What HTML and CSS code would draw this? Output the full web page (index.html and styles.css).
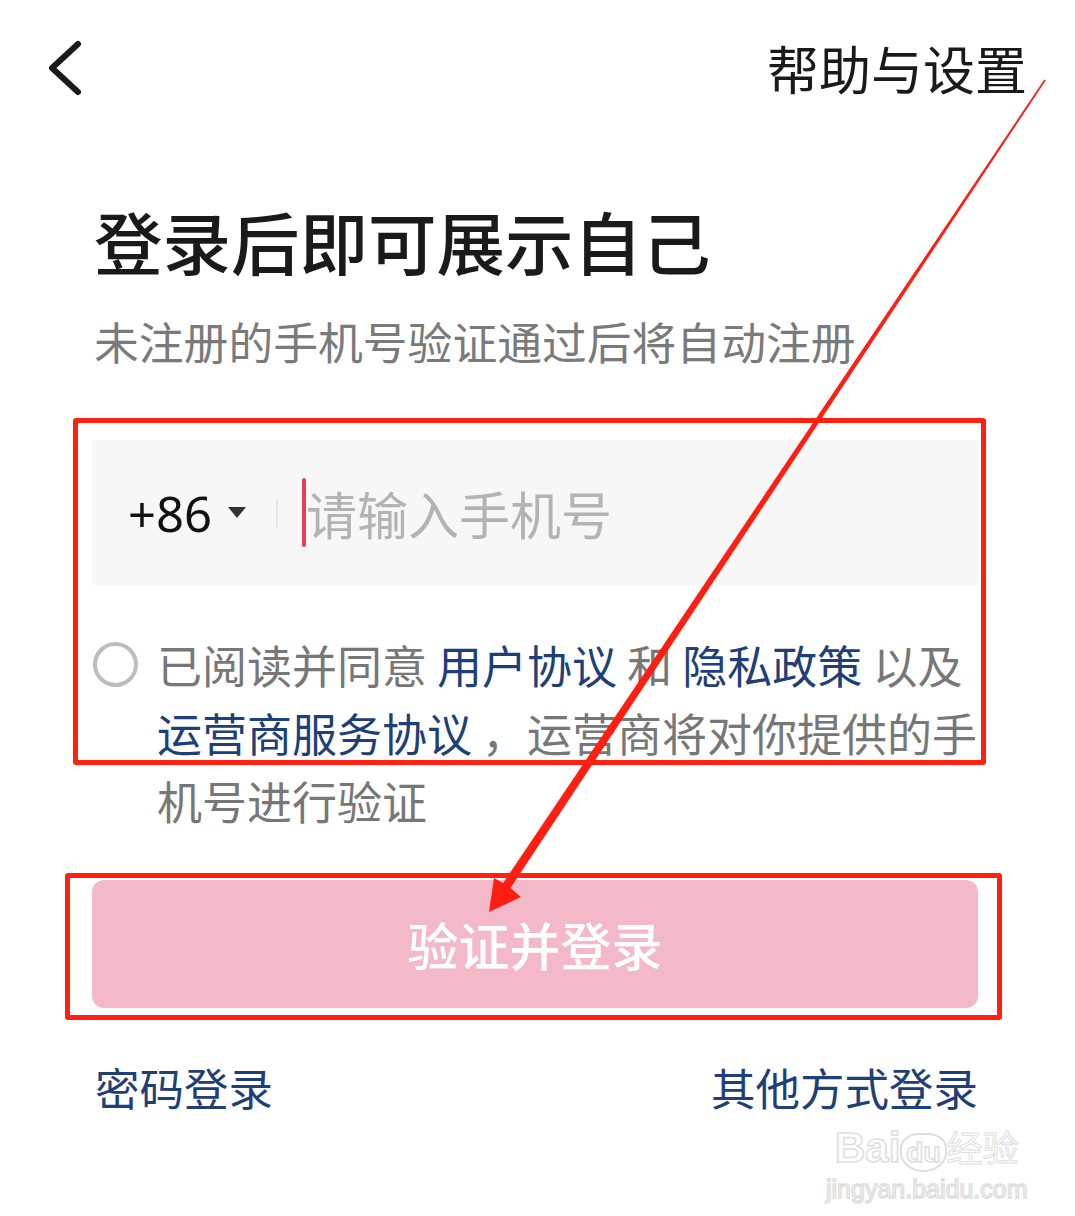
FILE: index.html
```html
<!DOCTYPE html>
<html lang="zh-CN">

<head>
    <meta charset="UTF-8">
    <meta name="viewport" content="width=device-width, initial-scale=1.0">
    <title>登录</title>
    <link rel="stylesheet" href="styles.css">
</head>

<body>
    <div class="page">
        <div class="topbar">
            <svg class="back" width="40" height="60" viewBox="0 0 40 60">
                <polyline points="30,4 4,28 30,52" fill="none" stroke="#1a1a1a" stroke-width="6"
                    stroke-linecap="round" stroke-linejoin="round" />
            </svg>
            <span class="help">帮助与设置</span>
        </div>

        <h1 class="title">登录后即可展示自己</h1>
        <p class="subtitle">未注册的手机号验证通过后将自动注册</p>

        <div class="phone">
            <span class="code">+86</span>
            <span class="caret"></span>
            <span class="divider"></span>
            <span class="cursor"></span>
            <span class="placeholder">请输入手机号</span>
        </div>

        <div class="agree">
            <span class="radio"></span>
            <p class="agree-text">已阅读并同意 <a>用户协议</a> 和 <a>隐私政策</a> 以及<a>运营商服务协议</a> ，运营商将对你提供的手机号进行验证</p>
        </div>

        <button class="submit">验证并登录</button>

        <div class="links">
            <a>密码登录</a>
            <a>其他方式登录</a>
        </div>

        <div class="watermark">
            <div class="wm-logo">Bai<span class="paw">du</span><span class="wm-cn">经验</span></div>
            <div class="wm-url">jingyan.baidu.com</div>
        </div>

        <!-- annotation marks drawn over the screenshot -->
        <div class="mark mark-input"></div>
        <div class="mark mark-button"></div>
        <svg class="arrow" width="1075" height="1216" viewBox="0 0 1075 1216">
            <polygon fill="#ff1e12"
                points="1044.3,79.6 1045.7,80.4 510.5,887.9 521,897 489,912 494,878 503.1,882.9" />
        </svg>
    </div>
</body>

</html>
```

FILE: styles.css
```css
html {
    background-color: #fff;
    font-family: "Noto Sans CJK SC", "Noto Sans", sans-serif;
}

body {
    margin: 0;
}

.page {
    position: relative;
    width: 1075px;
    height: 1216px;
    padding: 0 97px 0 92px;
    box-sizing: border-box;
    overflow: hidden;
}

.topbar {
    display: flex;
    justify-content: space-between;
    align-items: center;
    height: 130px;
    margin-left: -44px;
    margin-right: -49px;
}

.back {
    display: block;
    margin-top: 10px;
}

.help {
    font-size: 52px;
    line-height: 52px;
    color: #1a1a1a;
    margin-top: 6px;
}

.title {
    margin: 77px 0 0 2px;
    font-size: 68.5px;
    line-height: 68px;
    font-weight: 500;
    color: #1a1a1a;
}

.subtitle {
    margin: 44px 0 0 2px;
    font-size: 44.8px;
    line-height: 44px;
    color: #7a7a7a;
}

.phone {
    display: flex;
    align-items: center;
    margin-top: 77px;
    height: 145px;
    padding-left: 36px;
    background-color: #f7f7f7;
}

.code {
    font-family: "Noto Sans", sans-serif;
    font-size: 49px;
    color: #111;
}

.caret {
    width: 0;
    height: 0;
    margin-left: 16px;
    border-left: 9px solid transparent;
    border-right: 9px solid transparent;
    border-top: 11px solid #333;
}

.divider {
    width: 2px;
    height: 28px;
    margin-left: 30px;
    background-color: #e6e6e6;
}

.cursor {
    width: 4px;
    height: 69px;
    margin-left: 24px;
    border-radius: 2px;
    background-color: #e0405e;
}

.placeholder {
    font-size: 51px;
    color: #b3b3b3;
}

.agree {
    display: flex;
    gap: 19px;
    margin-top: 46px;
}

.radio {
    flex: none;
    width: 37px;
    height: 37px;
    margin-top: 11px;
    margin-left: 1px;
    border: 4px solid #bdbdbd;
    border-radius: 50%;
}

.agree-text {
    margin: 0;
    width: 830px;
    font-size: 45px;
    line-height: 68px;
    color: #777;
}

.agree-text a {
    color: #1f3f78;
}

.submit {
    display: block;
    width: 886px;
    height: 128px;
    margin-top: 45px;
    border: none;
    border-radius: 12px;
    background-color: #f3b9c8;
    color: #fff;
    font-family: inherit;
    font-size: 51px;
    font-weight: 500;
}

.links {
    display: flex;
    justify-content: space-between;
    margin-top: 57px;
    padding: 0 0 0 3px;
    font-size: 44.5px;
    line-height: 44px;
}

.links a {
    color: #1f3f78;
}

.watermark {
    position: absolute;
    left: 826px;
    top: 1124px;
    color: #fff;
    -webkit-text-stroke: 1.5px #dedede;
    text-align: center;
}

.wm-logo {
    font-family: "Liberation Sans", sans-serif;
    font-size: 42px;
    line-height: 44px;
    font-weight: 700;
}

.wm-cn {
    font-family: "Noto Sans CJK SC", sans-serif;
    font-size: 36px;
    font-weight: 400;
    -webkit-text-stroke: 1px #dedede;
}

.paw {
    font-size: 28px;
    padding: 2px 4px;
    border: 2px solid #dedede;
    border-radius: 40% 40% 50% 50%;
}

.wm-url {
    font-family: "Liberation Sans", sans-serif;
    font-size: 25px;
    line-height: 28px;
}

.mark {
    position: absolute;
    border: 5px solid #ff2012;
    border-radius: 3px;
}

.mark-input {
    left: 73px;
    top: 418px;
    width: 903px;
    height: 337px;
}

.mark-button {
    left: 65px;
    top: 873px;
    width: 927px;
    height: 137px;
}

.arrow {
    position: absolute;
    left: 0;
    top: 0;
    pointer-events: none;
}
```
